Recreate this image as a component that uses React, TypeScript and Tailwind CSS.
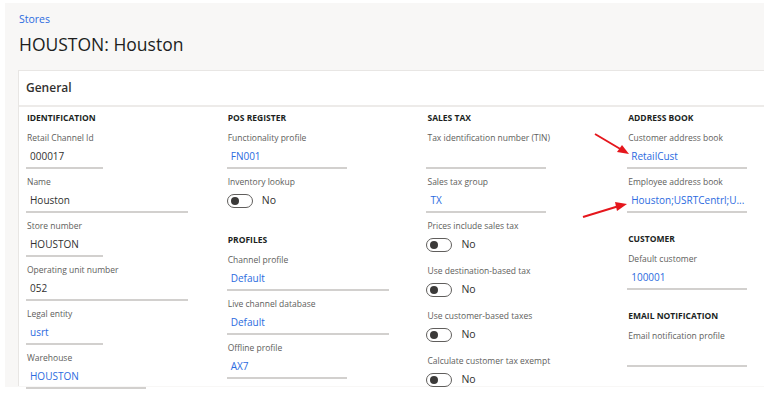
import React from "react";

type FieldProps = {
  label: string;
  value?: string;
  link?: boolean;
  width: string;
};

const font = { fontFamily: '"Segoe UI", "Open Sans", sans-serif' };

function Field({ label, value, link, width }: FieldProps) {
  return (
    <div className="pb-[7px]">
      <div className="h-[12px] pl-px text-[8.5px] leading-[12px] text-[#605e5c]">{label}</div>
      <div
        className={`mt-px h-[24px] whitespace-nowrap border-b-2 border-[#d2d0ce] pl-[4px] text-[10px] leading-[22px] ${width} ${
          link ? "text-[#2c6be0]" : "text-[#323130]"
        }`}
      >
        {value}
      </div>
    </div>
  );
}

function ToggleField({ label }: { label: string }) {
  return (
    <div className="pb-[13px]">
      <div className="h-[12px] pl-px text-[8.5px] leading-[12px] text-[#605e5c]">{label}</div>
      <div className="mt-[6px] flex h-[14px] items-center">
        <div className="flex h-[14px] w-[26px] items-center rounded-full border border-[#605e5c] pl-[3px]">
          <div className="h-[8px] w-[8px] rounded-full bg-[#3b3a39]" />
        </div>
        <span className="ml-[9px] text-[10.5px] text-[#323130]">No</span>
      </div>
    </div>
  );
}

function Section({ title, first, children }: { title: string; first?: boolean; children: React.ReactNode }) {
  return (
    <div className={first ? "" : "mt-[13px]"}>
      <div className="mb-[8px] h-[12px] pl-px text-[8.5px] font-bold leading-[12px] text-[#201f1e]">{title}</div>
      {children}
    </div>
  );
}

export default function App() {
  return (
    <div className="relative h-[393px] w-[764px] overflow-hidden bg-white" style={font}>
      <div className="ml-[5px] mt-[3px] h-[384px] bg-[#f8f7f6] pl-[13px]">
        {/* Breadcrumb + title */}
        <div className="pl-px pt-[9px] text-[10.5px] leading-[14px] text-[#2c6be0]">Stores</div>
        <h1 className="mt-[6px] pl-px text-[17.5px] font-medium leading-[24px] text-[#201f1e]">HOUSTON: Houston</h1>

        {/* Card */}
        <div className="mt-[14px] h-[316px] border-l border-t border-[#e8e6e4] bg-white">
          <div className="flex h-[34px] items-center pl-[7px] text-[12px] font-semibold text-[#323130]">General</div>
          <div className="h-[2px] bg-[#edebe9]" />
          <div className="flex pl-[7px] pt-[5px]">
            <div className="w-[201px]">
              <Section title="IDENTIFICATION" first>
                <Field label="Retail Channel Id" value="000017" width="w-[77px]" />
                <Field label="Name" value="Houston" width="w-[162px]" />
                <Field label="Store number" value="HOUSTON" width="w-[77px]" />
                <Field label="Operating unit number" value="052" width="w-[162px]" />
                <Field label="Legal entity" value="usrt" link width="w-[77px]" />
                <Field label="Warehouse" value="HOUSTON" link width="w-[120px]" />
              </Section>
            </div>
            <div className="w-[200px]">
              <Section title="POS REGISTER" first>
                <Field label="Functionality profile" value="FN001" link width="w-[120px]" />
                <ToggleField label="Inventory lookup" />
              </Section>
              <Section title="PROFILES">
                <Field label="Channel profile" value="Default" link width="w-[162px]" />
                <Field label="Live channel database" value="Default" link width="w-[162px]" />
                <Field label="Offline profile" value="AX7" link width="w-[120px]" />
              </Section>
            </div>
            <div className="w-[201px]">
              <Section title="SALES TAX" first>
                <Field label="Tax identification number (TIN)" width="w-[120px]" />
                <Field label="Sales tax group" value="TX" link width="w-[120px]" />
                <ToggleField label="Prices include sales tax" />
                <ToggleField label="Use destination-based tax" />
                <ToggleField label="Use customer-based taxes" />
                <ToggleField label="Calculate customer tax exempt" />
              </Section>
            </div>
            <div className="w-[137px]">
              <Section title="ADDRESS BOOK" first>
                <Field label="Customer address book" value="RetailCust" link width="w-[120px]" />
                <Field label="Employee address book" value="Houston;USRTCentrl;U..." link width="w-[120px]" />
              </Section>
              <Section title="CUSTOMER">
                <Field label="Default customer" value="100001" link width="w-[120px]" />
              </Section>
              <Section title="EMAIL NOTIFICATION">
                <Field label="Email notification profile" width="w-[120px]" />
              </Section>
            </div>
          </div>
        </div>
      </div>

      {/* Annotation arrows */}
      <svg className="pointer-events-none absolute left-0 top-0" width="764" height="393">
        <line x1="595" y1="134" x2="622" y2="150" stroke="#e5161c" strokeWidth="2" />
        <polygon points="629,154 617,152 622,145" fill="#e5161c" />
        <line x1="583" y1="217" x2="619" y2="206" stroke="#e5161c" strokeWidth="2" />
        <polygon points="627,204 617,211 615,202" fill="#e5161c" />
      </svg>
    </div>
  );
}
